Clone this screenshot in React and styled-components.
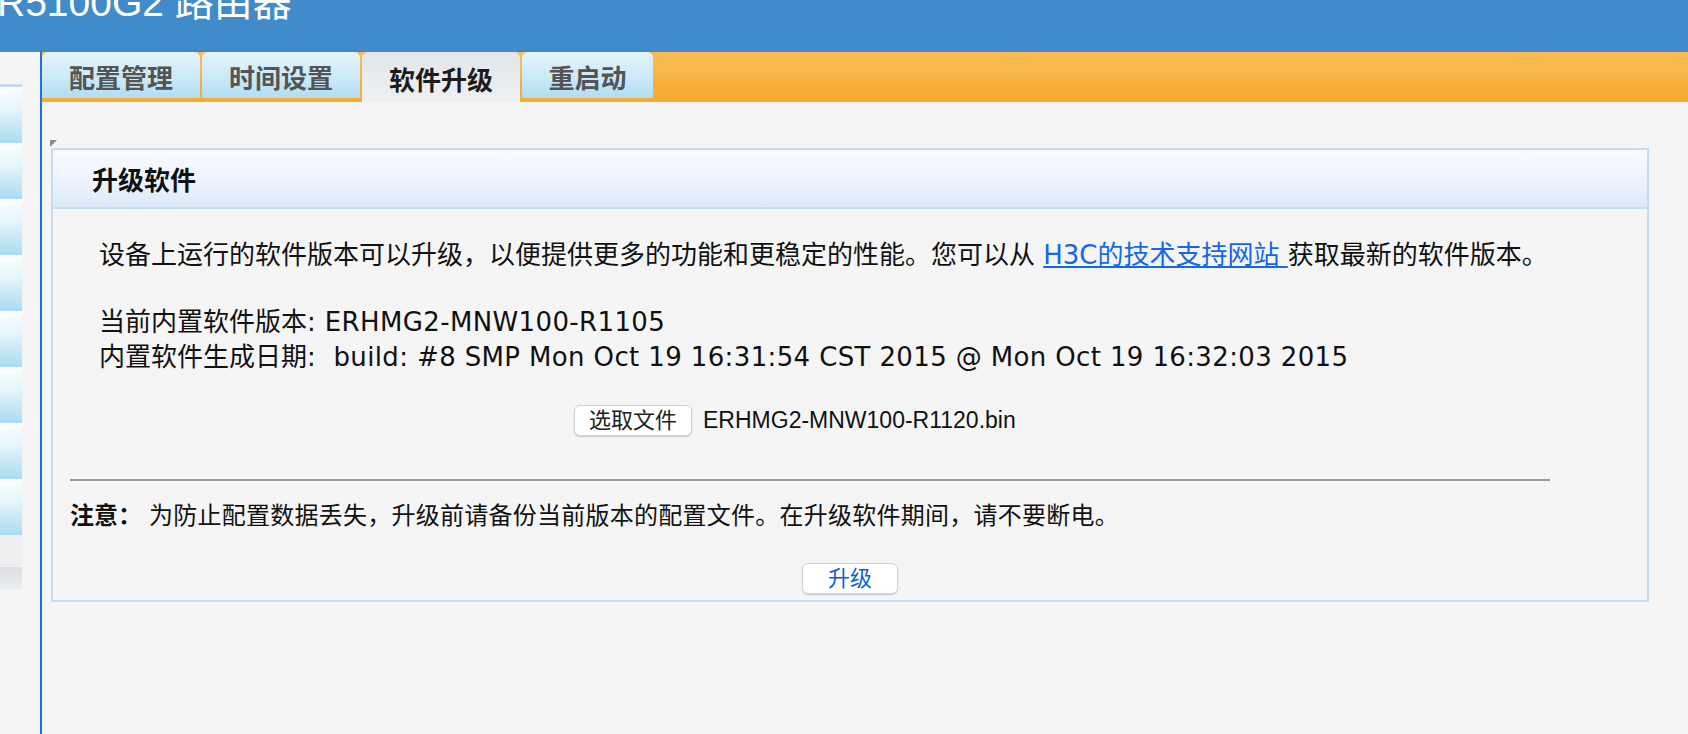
import React from "react";
import styled, { createGlobalStyle } from "styled-components";

const GlobalStyle = createGlobalStyle`
  html, body {
    margin: 0;
    padding: 0;
    background: #f5f5f5;
    font-family: "DejaVu Sans", "Noto Sans CJK SC", sans-serif;
    color: #111;
  }
  * { box-sizing: border-box; }
`;

const Page = styled.div`
  min-height: 100vh;
  display: flex;
  flex-direction: column;
  background: #f5f5f5;
`;

const Header = styled.header`
  height: 52px;
  flex: none;
  background: #418bca;
  overflow: hidden;
`;

const Title = styled.h1`
  margin: -17px 0 0 -3px;
  font-family: "Liberation Sans", "Noto Sans CJK SC", sans-serif;
  font-weight: normal;
  font-size: 39px;
  line-height: 39px;
  color: #ffffff;
  white-space: nowrap;
`;

const Layout = styled.div`
  flex: 1;
  display: flex;
`;

const Sidebar = styled.nav`
  width: 40px;
  flex: none;
  padding-top: 32px;
`;

const MenuList = styled.div`
  width: 22px;
  display: flex;
  flex-direction: column;
  border-top: 3px solid #c6dcee;
`;

const MenuItem = styled.div`
  height: 56px;
  background: linear-gradient(#fbfeff 0%, #e6f5fb 40%, #a8dcf2 100%);
`;

const MenuFooter = styled.div`
  height: ${(p) => (p.$dark ? 23 : 32)}px;
  background: ${(p) =>
    p.$dark ? "linear-gradient(#dcdfe3, #eceef0)" : "#efefef"};
`;

const Main = styled.main`
  flex: 1;
  display: flex;
  flex-direction: column;
  border-left: 2px solid #1f6fe5;
`;

const TabBar = styled.div`
  height: 50px;
  display: flex;
  align-items: flex-start;
  background: linear-gradient(#f9bb54 0%, #f8b74c 45%, #f6ae38 62%, #f6ab33 100%);
`;

const Tab = styled.div`
  width: ${(p) => p.$w}px;
  height: ${(p) => (p.$active ? 50 : 46)}px;
  margin-right: 2px;
  border-radius: 6px 6px 0 0;
  display: flex;
  align-items: center;
  justify-content: center;
  padding-top: ${(p) => (p.$active ? 3 : 2)}px;
  font-family: "Noto Sans CJK SC", sans-serif;
  font-weight: bold;
  font-size: 26px;
  color: ${(p) => (p.$active ? "#1c1c1c" : "#545454")};
  background: ${(p) =>
    p.$active
      ? "linear-gradient(#e3e6ea 0%, #eef0f2 100%)"
      : "linear-gradient(#e4f4fb 0%, #cbeaf7 55%, #b0def2 100%)"};
`;

const Content = styled.div`
  padding: 38px 39px 0 8px;
  display: flex;
  flex-direction: column;
`;

const Corner = styled.div`
  width: 7px;
  height: 7px;
  background: #8c8c8c;
  clip-path: polygon(0 0, 100% 0, 0 100%);
`;

const Panel = styled.section`
  margin: 1px 0 0 1px;
  border: 2px solid #c6dcf0;
  background: #f5f5f5;
`;

const PanelHeader = styled.div`
  height: 59px;
  border-bottom: 2px solid #c6dcf0;
  background: linear-gradient(#f9fbff 0%, #eef4fd 50%, #dce9f9 100%);
  display: flex;
  align-items: center;
  padding-left: 39px;
`;

const PanelTitle = styled.h2`
  margin: 0;
  font-family: "Noto Sans CJK SC", sans-serif;
  font-weight: bold;
  font-size: 26px;
  color: #111;
`;

const PanelBody = styled.div`
  padding-bottom: 6px;
  display: flex;
  flex-direction: column;
`;

const Intro = styled.div`
  padding: 29px 0 0 46px;
`;

const Para = styled.p`
  margin: 0;
  font-size: 26px;
  line-height: 35px;
  white-space: nowrap;
`;

const Value = styled.span`
  letter-spacing: 0.37px;
`;

const InfoBlock = styled.div`
  margin-top: 32px;
`;

const Link = styled.a`
  color: #1466ea;
  text-decoration: underline;
  cursor: pointer;
`;

const FileRow = styled.div`
  width: 552px;
  margin: 30px auto 0;
  display: flex;
  align-items: center;
  gap: 11px;
`;

const NativeButton = styled.button`
  height: 31px;
  padding: 0 ${(p) => (p.$wide ? 0 : 14)}px;
  width: ${(p) => (p.$wide ? "96px" : "auto")};
  border: 1px solid #d3d3d3;
  border-radius: 6px;
  background: #ffffff;
  box-shadow: 0 1px 1.5px rgba(0, 0, 0, 0.18);
  font-family: "Liberation Sans", "Noto Sans CJK SC", sans-serif;
  font-size: 22px;
  line-height: 29px;
  color: ${(p) => (p.$primary ? "#0a63d8" : "#222")};
  cursor: pointer;
`;

const FileName = styled.span`
  font-family: "Liberation Sans", "Noto Sans CJK SC", sans-serif;
  font-size: 23px;
  color: #111;
`;

const Divider = styled.hr`
  margin: 43px 97px 0 17px;
  height: 0;
  border: none;
  border-top: 2px solid #9d9d9d;
`;

const Note = styled.p`
  margin: 17px 0 0 17px;
  font-size: 24px;
  line-height: 32px;
  white-space: nowrap;
`;

const NoteLabel = styled.strong`
  font-family: "Noto Sans CJK SC", sans-serif;
  font-weight: bold;
  margin-right: 7px;
`;

const NoteText = styled.span`
  letter-spacing: 0.25px;
`;

const Actions = styled.div`
  margin-top: 31px;
  display: flex;
  justify-content: center;
`;

const tabs = [
  { label: "配置管理", w: 158 },
  { label: "时间设置", w: 158 },
  { label: "软件升级", w: 158, active: true },
  { label: "重启动", w: 131 },
];

export default function App() {
  return (
    <>
      <GlobalStyle />
      <Page>
        <Header>
          <Title>R5100G2 路由器</Title>
        </Header>
        <Layout>
          <Sidebar>
            <MenuList>
              {Array.from({ length: 8 }).map((_, i) => (
                <MenuItem key={i} />
              ))}
              <MenuFooter />
              <MenuFooter $dark />
            </MenuList>
          </Sidebar>
          <Main>
            <TabBar>
              {tabs.map((t) => (
                <Tab key={t.label} $w={t.w} $active={t.active}>
                  {t.label}
                </Tab>
              ))}
            </TabBar>
            <Content>
              <Corner />
              <Panel>
                <PanelHeader>
                  <PanelTitle>升级软件</PanelTitle>
                </PanelHeader>
                <PanelBody>
                  <Intro>
                    <Para>
                      设备上运行的软件版本可以升级，以便提供更多的功能和更稳定的性能。您可以从 <Link>H3C的技术支持网站 </Link>获取最新的软件版本。
                    </Para>
                    <InfoBlock>
                      <Para>
                        当前内置软件版本<Value>: ERHMG2-MNW100-R1105</Value>
                      </Para>
                      <Para>
                        内置软件生成日期
                        <Value>
                          :{"\u00a0"} build: #8 SMP Mon Oct 19 16:31:54 CST 2015 @ Mon Oct 19 16:32:03 2015
                        </Value>
                      </Para>
                    </InfoBlock>
                  </Intro>
                  <FileRow>
                    <NativeButton type="button">选取文件</NativeButton>
                    <FileName>ERHMG2-MNW100-R1120.bin</FileName>
                  </FileRow>
                  <Divider />
                  <Note>
                    <NoteLabel>注意：</NoteLabel>
                    <NoteText>为防止配置数据丢失，升级前请备份当前版本的配置文件。在升级软件期间，请不要断电。</NoteText>
                  </Note>
                  <Actions>
                    <NativeButton type="button" $wide $primary>
                      升级
                    </NativeButton>
                  </Actions>
                </PanelBody>
              </Panel>
            </Content>
          </Main>
        </Layout>
      </Page>
    </>
  );
}
